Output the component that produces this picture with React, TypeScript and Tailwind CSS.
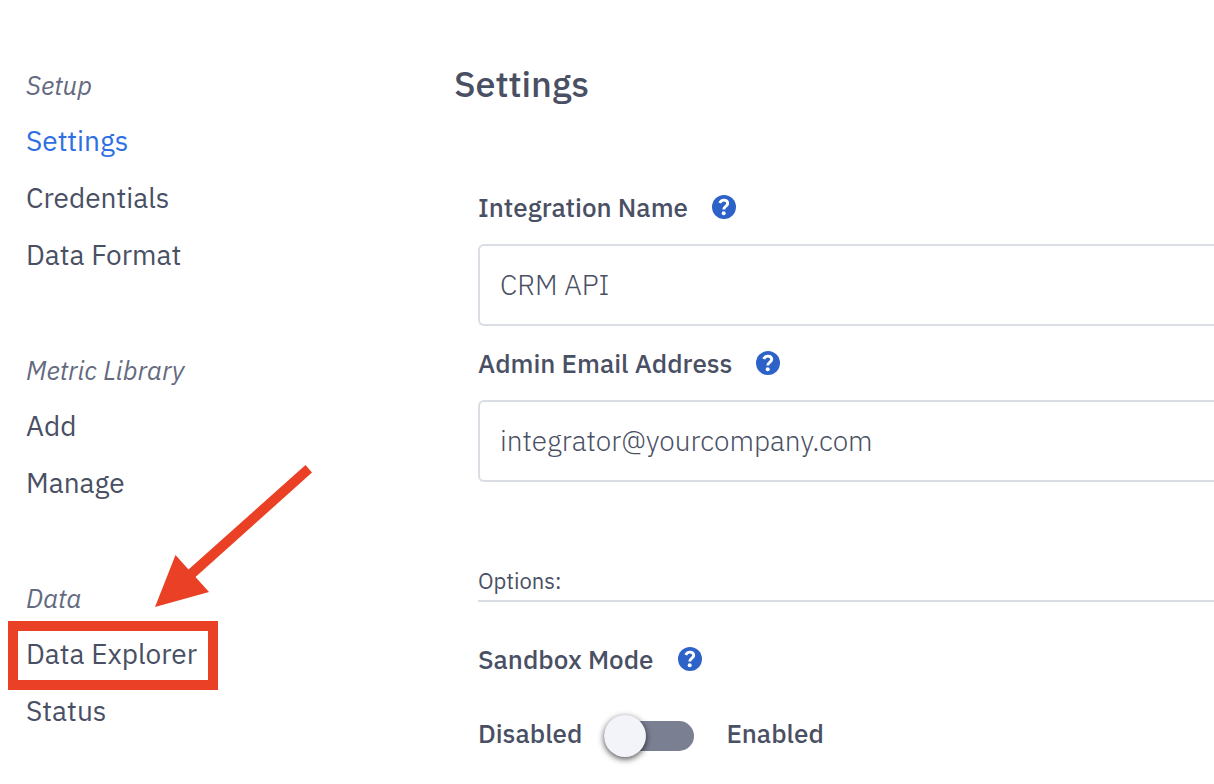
import { useState } from "react";

type NavItem = { label: string; active?: boolean; marked?: boolean };

const NAV: { title: string; items: NavItem[] }[] = [
  {
    title: "Setup",
    items: [
      { label: "Settings", active: true },
      { label: "Credentials" },
      { label: "Data Format" },
    ],
  },
  { title: "Metric Library", items: [{ label: "Add" }, { label: "Manage" }] },
  {
    title: "Data",
    items: [{ label: "Data Explorer", marked: true }, { label: "Status" }],
  },
];

export default function App() {
  return (
    <div className="flex min-h-screen overflow-hidden bg-white pt-14 font-['IBM_Plex_Sans',Roboto,sans-serif] text-[#4a5064]">
      <Sidebar />
      <main className="min-w-0 flex-1">
        <h1 className="pb-0.5 text-4xl leading-[55px] font-medium">Settings</h1>
        <form className="mt-[57px] pl-6">
          <TextField id="name" label="Integration Name" value="CRM API" />
          <TextField
            id="email"
            label="Admin Email Address"
            value="integrator@yourcompany.com"
          />
          <h2 className="mt-20 h-10 border-b-2 border-[#dadde4] text-[22px] leading-[38px]">
            Options:
          </h2>
          <SandboxMode />
        </form>
      </main>
    </div>
  );
}

function Sidebar() {
  return (
    <nav className="flex w-[454px] shrink-0 flex-col gap-[57px] pl-[26px]">
      {NAV.map((section) => (
        <section key={section.title}>
          <h2 className="pt-0.5 text-[26px] leading-[55px] text-[#646a80] italic">
            {section.title}
          </h2>
          <ul>
            {section.items.map((item) => (
              <li
                key={item.label}
                className="relative pb-0.5 text-[28px] leading-[55px]"
              >
                <a href="#" className={item.active ? "text-[#2f6fe4]" : ""}>
                  {item.label}
                </a>
                {item.marked && <Marker />}
              </li>
            ))}
          </ul>
        </section>
      ))}
    </nav>
  );
}

/* Red frame and arrow over a menu item */
function Marker() {
  return (
    <div className="pointer-events-none absolute -top-[5px] -left-[18px] h-[69px] w-[210px] border-10 border-[#ea4025]">
      <svg
        className="absolute -top-[166px] left-[137px] h-[142px] w-[158px]"
        viewBox="155 465 158 142"
        fill="#ea4025"
        aria-hidden="true"
      >
        <path d="M155 607L175.5 555L188.5 569.5L305.5 465L312 472.5L195.5 577L209 592Z" />
      </svg>
    </div>
  );
}

function HelpButton({ topic }: { topic: string }) {
  return (
    <button type="button" aria-label={`Help: ${topic}`}>
      <svg className="size-6" viewBox="0 0 24 24" aria-hidden="true">
        <circle cx="12" cy="12" r="12" fill="#2d63c8" />
        <path
          d="M7.8 8C8.5 6 10 5.1 11.9 5.1C14.2 5.1 15.7 6.5 15.7 8.5C15.7 11.2 11.7 11 11.7 14.6"
          fill="none"
          stroke="#fff"
          strokeWidth="2.9"
        />
        <circle cx="11.7" cy="18.2" r="2" fill="#fff" />
      </svg>
    </button>
  );
}

function TextField({
  id,
  label,
  value,
}: {
  id: string;
  label: string;
  value: string;
}) {
  return (
    <div>
      <div className="flex h-[74px] items-center gap-6">
        <label htmlFor={id} className="text-[26px] font-medium">
          {label}
        </label>
        <HelpButton topic={label} />
      </div>
      <input
        id={id}
        type="text"
        defaultValue={value}
        className="block h-[82px] w-full rounded-l-md border-2 border-r-0 border-[#dadde4] bg-white px-5 pb-0.5 text-[28px] font-light outline-none"
      />
    </div>
  );
}

function SandboxMode() {
  const [enabled, setEnabled] = useState(false);

  return (
    <div className="mt-5 text-[26px] font-medium">
      <div className="flex h-[74px] items-center gap-6">
        <label htmlFor="sandbox">Sandbox Mode</label>
        <HelpButton topic="Sandbox Mode" />
      </div>
      <div className="flex h-20 items-center">
        <span className="pb-1.5">Disabled</span>
        <input
          id="sandbox"
          type="checkbox"
          role="switch"
          checked={enabled}
          onChange={(e) => setEnabled(e.target.checked)}
          className="mr-8 ml-[22px] flex h-[30px] w-[90px] appearance-none items-center rounded-full bg-[#7b7f92] before:size-[42px] before:shrink-0 before:rounded-full before:bg-[#f3f4f9] before:shadow-[0_2px_6px_rgba(0,0,0,0.7)] checked:justify-end checked:bg-[#2d63c8]"
        />
        <span className="pb-1.5">Enabled</span>
      </div>
    </div>
  );
}
